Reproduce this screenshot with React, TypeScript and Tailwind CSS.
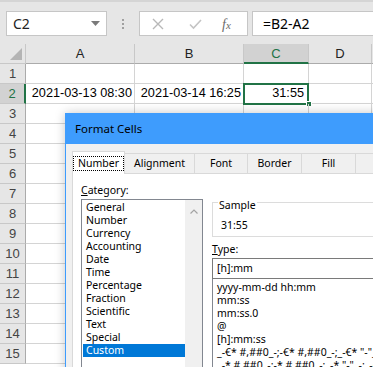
import React from "react";

const cols = [
  { k: "A", w: "w-[109px]" },
  { k: "B", w: "w-[109px]" },
  { k: "C", w: "w-[65px]" },
  { k: "D", w: "w-[63px]" },
];

const categories = [
  "General",
  "Number",
  "Currency",
  "Accounting",
  "Date",
  "Time",
  "Percentage",
  "Fraction",
  "Scientific",
  "Text",
  "Special",
  "Custom",
];

const types = [
  "yyyy-mm-dd hh:mm",
  "mm:ss",
  "mm:ss.0",
  "@",
  "[h]:mm:ss",
  '_-€* #,##0_-;-€* #,##0_-;_-€* "-"_-;_-@_-',
  '_-* # ##0_-;-* # ##0_-;_-* "-"_-;_-@_-',
];

function Row({ n }: { n: number }) {
  const sel = n === 2;
  return (
    <div className="flex h-[20px]">
      <div
        className={
          "w-[26px] shrink-0 flex items-center justify-center border-b border-[#c8c8c8] text-[13px] " +
          (sel
            ? "bg-[#d2d2d2] text-[#217346] border-r-2 border-r-[#217346]"
            : "bg-[#e6e6e6] text-[#444] border-r border-r-[#ababab]")
        }
      >
        {n}
      </div>
      <div className="w-[109px] shrink-0 border-r border-b border-[#d4d4d4] flex items-center justify-end pr-[2px] text-[12.7px] text-black">
        {sel ? "2021-03-13 08:30" : ""}
      </div>
      <div className="w-[109px] shrink-0 border-r border-b border-[#d4d4d4] flex items-center justify-end pr-[2px] text-[12.7px] text-black">
        {sel ? "2021-03-14 16:25" : ""}
      </div>
      <div className="relative w-[65px] shrink-0 border-r border-b border-[#d4d4d4] flex items-center justify-end pr-[4px] text-[12.7px] text-black">
        {sel ? (
          <>
            <span>31:55</span>
            <div className="absolute left-[-1px] top-[-1px] w-[66px] h-[22px] border-2 border-[#217346]" />
            <div className="absolute right-[-4px] bottom-[-4px] w-[6px] h-[6px] bg-[#217346] border border-white" />
          </>
        ) : null}
      </div>
      <div className="w-[63px] shrink-0 border-r border-b border-[#d4d4d4]" />
      <div className="flex-1 border-b border-[#d4d4d4]" />
    </div>
  );
}

export default function App() {
  return (
    <div className="relative w-[373px] h-[367px] overflow-hidden bg-white font-['Liberation_Sans',sans-serif]">
      {/* formula bar */}
      <div className="h-[46px] bg-[#e6e6e6] flex items-start pt-[11px] border-t-[2px] border-[#d5d5d5]">
        <div className="ml-[6px] w-[101px] h-[25px] bg-white border border-[#c6c6c6] flex items-center justify-between px-[6px] mt-[-2px]">
          <span className="text-[14px] text-[#222] font-['Noto_Sans',sans-serif]">C2</span>
          <svg width="9" height="5" viewBox="0 0 9 5">
            <path d="M0 0 L9 0 L4.5 5 Z" fill="#7a7a7a" />
          </svg>
        </div>
        <div className="w-[32px] h-[25px] mt-[-2px] flex flex-col items-center justify-center gap-[2px]">
          <div className="w-[2px] h-[2px] bg-[#a0a0a0]" />
          <div className="w-[2px] h-[2px] bg-[#a0a0a0]" />
          <div className="w-[2px] h-[2px] bg-[#a0a0a0]" />
        </div>
        <div className="relative w-[109px] h-[25px] mt-[-2px] bg-white border border-[#c6c6c6]">
          <svg className="absolute left-[12px] top-[6px]" width="12" height="12" viewBox="0 0 12 12">
            <path d="M1 1 L11 11 M11 1 L1 11" stroke="#b8b8b8" strokeWidth="1.4" />
          </svg>
          <svg className="absolute left-[49px] top-[6px]" width="13" height="12" viewBox="0 0 13 12">
            <path d="M1 6.5 L4.5 10 L12 2" stroke="#c4c4c4" strokeWidth="1.6" fill="none" />
          </svg>
          <span className="absolute left-[82px] top-[2px] text-[14px] italic text-[#6b6b6b] font-['Liberation_Serif',serif]">
            f<span className="text-[11px]">x</span>
          </span>
        </div>
        <div className="ml-[4px] flex-1 h-[25px] mt-[-2px] bg-white border border-[#c6c6c6] border-r-0 flex items-center pl-[10px]">
          <span className="text-[14px] text-black font-['Noto_Sans',sans-serif]">=B2-A2</span>
        </div>
      </div>

      {/* column headers */}
      <div className="flex h-[20px] mt-[-2px] bg-[#e6e6e6]">
        <div className="relative w-[26px] shrink-0 border-r border-b border-[#c8c8c8]">
          <svg className="absolute right-[3px] bottom-[3px]" width="12" height="12" viewBox="0 0 12 12">
            <path d="M12 0 L12 12 L0 12 Z" fill="#b4b4b4" />
          </svg>
        </div>
        {cols.map((c) => (
          <div
            key={c.k}
            className={
              c.w +
              " shrink-0 border-r flex items-center justify-center text-[13px] " +
              (c.k === "C"
                ? "bg-[#d2d2d2] border-r-[#c8c8c8] border-b-2 border-b-[#217346] text-[#217346] pt-[2px]"
                : "border-[#c8c8c8] border-b border-b-[#ababab] text-[#222]")
            }
          >
            {c.k}
          </div>
        ))}
        <div className="flex-1 border-b border-[#ababab]" />
      </div>

      {Array.from({ length: 15 }, (_, i) => (
        <Row key={i} n={i + 1} />
      ))}

      {/* Format Cells dialog */}
      <div className="absolute left-[65px] top-[113px] w-[330px] h-[280px] border border-[#3e9cfd] bg-[#f0f0f0] shadow-[0_0_10px_rgba(0,0,0,0.22)] font-['Noto_Sans',sans-serif] flex flex-col">
        <div className="h-[30px] bg-[#3e9cfd] flex items-center pl-[9px] text-[11.5px] text-black shrink-0">
          Format Cells
        </div>
        {/* tabs */}
        <div className="flex items-end pl-[6px] mt-[6px] h-[23px] shrink-0">
          <div className="relative w-[60px] h-[23px] bg-white border border-[#d9d9d9] border-b-0 flex items-center justify-center text-[10.5px] text-black z-10 mb-[-1px]">
            <span className="border border-dotted border-black px-[4px] leading-[13px]">Number</span>
          </div>
          {[
            ["Alignment", "w-[70px]"],
            ["Font", "w-[53px]"],
            ["Border", "w-[54px]"],
            ["Fill", "w-[54px]"],
            ["Protection", "w-[90px]"],
          ].map(([t, w]) => (
            <div
              key={t}
              className={w + " h-[20px] shrink-0 bg-[#f0f0f0] border border-l-0 border-[#d9d9d9] border-b-0 flex items-center justify-center text-[10.5px] text-black"}
            >
              {t}
            </div>
          ))}
        </div>
        {/* panel */}
        <div className="ml-[6px] flex-1 bg-white border border-[#d9d9d9] flex gap-[9px] pl-[8px] pt-[9px]">
          <div className="flex flex-col w-[122px] shrink-0">
            <div className="text-[10.5px] leading-[15px] text-black">
              <span className="underline">C</span>ategory:
            </div>
            <div className="mt-[1px] flex-1 border border-[#828790] flex">
              <div className="flex-1 flex flex-col pt-[1px] pl-[1px]">
                {categories.map((c) => (
                  <div
                    key={c}
                    className={
                      "h-[13px] leading-[13px] pl-[3px] text-[10.5px] " +
                      (c === "Custom" ? "bg-[#0078d7] text-white" : "text-black")
                    }
                  >
                    {c}
                  </div>
                ))}
              </div>
              <div className="w-[17px] bg-[#f0f0f0] flex justify-center pt-[9px]">
                <svg width="8" height="5" viewBox="0 0 8 5">
                  <path d="M0.5 4.5 L4 1 L7.5 4.5" stroke="#a3a3a3" strokeWidth="1.2" fill="none" />
                </svg>
              </div>
            </div>
          </div>
          <div className="flex flex-col flex-1">
            <div className="relative mt-[19px] h-[35px] border border-[#dcdcdc] shrink-0">
              <span className="absolute left-[5px] top-[-5px] bg-white px-[1px] text-[10.5px] leading-[15px] text-black">
                Sample
              </span>
              <div className="pl-[8px] pt-[15px] text-[10.5px] leading-[15px] text-black">31:55</div>
            </div>
            <div className="mt-[5px] text-[10.5px] leading-[15px] text-black">
              <span className="underline">T</span>ype:
            </div>
            <div className="mt-[1px] h-[21px] shrink-0 border border-[#7a7a7a] border-r-0 flex items-center pl-[4px] text-[10.5px] text-black">
              [h]:mm
            </div>
            <div className="flex-1 border border-t-0 border-[#828790] border-r-0 pt-[2px] pl-[4px] overflow-hidden">
              {types.map((t) => (
                <div key={t} className="h-[13px] leading-[13px] text-[10.5px] text-black whitespace-nowrap">
                  {t}
                </div>
              ))}
            </div>
          </div>
        </div>
      </div>
    </div>
  );
}
